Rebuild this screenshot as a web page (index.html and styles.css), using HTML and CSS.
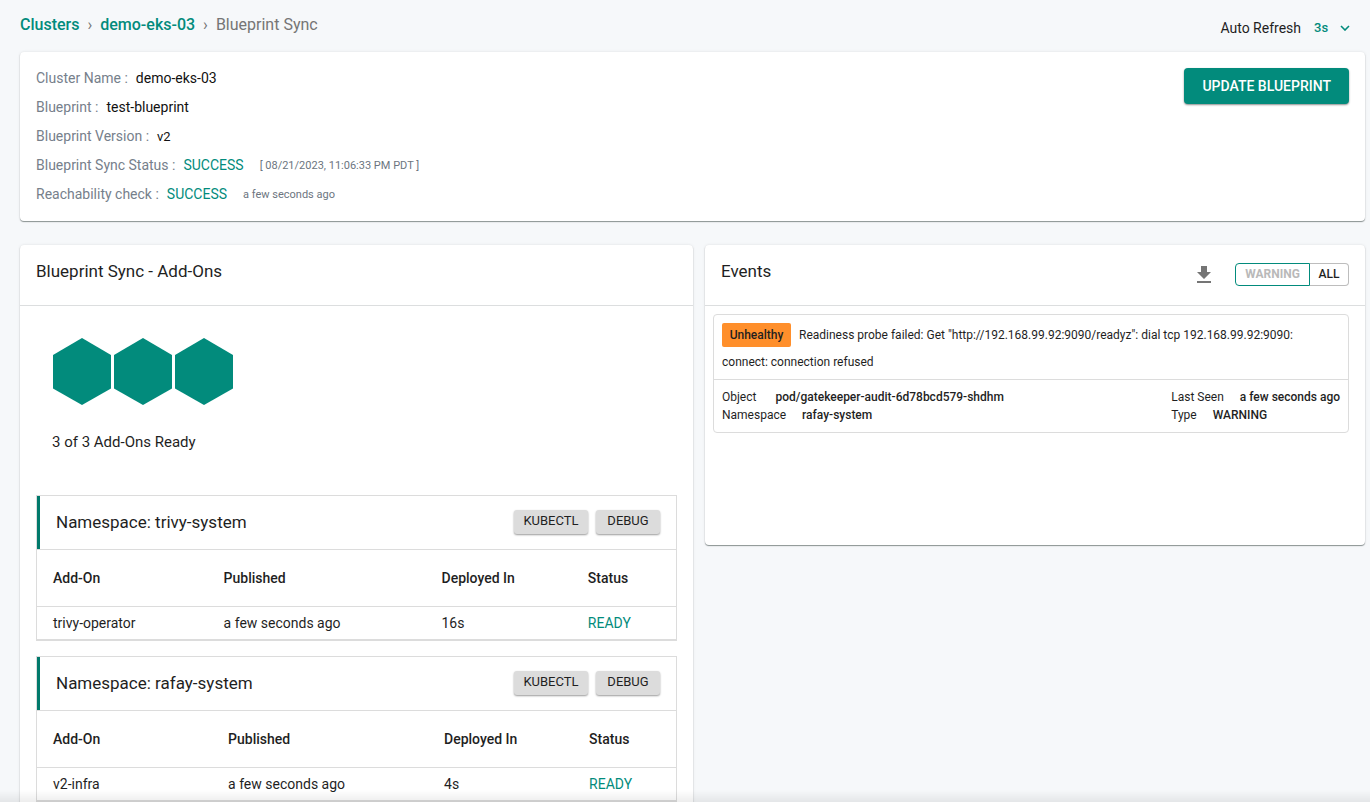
FILE: index.html
```html
<!DOCTYPE html>
<html lang="en">
<head>
<meta charset="utf-8">
<meta name="viewport" content="width=device-width, initial-scale=1">
<title>Blueprint Sync</title>
<link rel="stylesheet" href="styles.css">
</head>
<body>
<header class="topbar">
  <nav class="crumbs" aria-label="Breadcrumb">
    <a href="#clusters">Clusters</a>
    <span class="crumb-sep">›</span>
    <a href="#demo-eks-03">demo-eks-03</a>
    <span class="crumb-sep">›</span>
    <span>Blueprint Sync</span>
  </nav>
  <div class="refresh">
    <label for="refresh">Auto Refresh</label>
    <span class="select-wrap">
      <select id="refresh"><option>3s</option></select>
      <svg class="chevron" width="10" height="6" viewBox="0 0 10 6" aria-hidden="true"><path d="M1 1l4 4 4-4" fill="none" stroke="currentColor" stroke-width="1.6"/></svg>
    </span>
  </div>
</header>

<main class="page">
  <section class="card summary">
    <dl class="facts">
      <div class="fact"><dt>Cluster Name :</dt><dd>demo-eks-03</dd></div>
      <div class="fact"><dt>Blueprint :</dt><dd>test-blueprint</dd></div>
      <div class="fact"><dt>Blueprint Version :</dt><dd class="version">v2</dd></div>
      <div class="fact"><dt>Blueprint Sync Status :</dt><dd class="ok">SUCCESS</dd><dd class="when">[ 08/21/2023, 11:06:33 PM PDT ]</dd></div>
      <div class="fact"><dt>Reachability check :</dt><dd class="ok">SUCCESS</dd><dd class="when">a few seconds ago</dd></div>
    </dl>
    <button class="primary" type="button">UPDATE BLUEPRINT</button>
  </section>

  <div class="columns">
    <section class="card">
      <div class="card-head"><h2>Blueprint Sync - Add-Ons</h2></div>
      <div class="ready">
        <svg class="hexes" width="182" height="68" viewBox="0 0 182 68" role="img" aria-label="Three add-ons ready">
          <path d="M30 0L59 17V50.500L30 67L1 50.500V17Z"/>
          <path d="M91 0L120 17V50.500L91 67L62 50.500V17Z"/>
          <path d="M152 0L181 17V50.500L152 67L123 50.500V17Z"/>
        </svg>
        <p>3 of 3 Add-Ons Ready</p>
      </div>
      <div class="namespaces">
        <section class="ns">
          <div class="ns-head">
            <h3>Namespace: trivy-system</h3>
            <div class="ns-actions"><button class="small wide" type="button">KUBECTL</button><button class="small" type="button">DEBUG</button></div>
          </div>
          <table class="addons">
            <thead><tr><th class="c-name">Add-On</th><th class="c-pub">Published</th><th class="c-dep">Deployed In</th><th>Status</th></tr></thead>
            <tbody><tr><td>trivy-operator</td><td>a few seconds ago</td><td>16s</td><td class="ok">READY</td></tr></tbody>
          </table>
        </section>
        <section class="ns">
          <div class="ns-head">
            <h3>Namespace: rafay-system</h3>
            <div class="ns-actions"><button class="small wide" type="button">KUBECTL</button><button class="small" type="button">DEBUG</button></div>
          </div>
          <table class="addons addons-infra">
            <thead><tr><th class="c-name">Add-On</th><th class="c-pub">Published</th><th class="c-dep">Deployed In</th><th>Status</th></tr></thead>
            <tbody><tr><td>v2-infra</td><td>a few seconds ago</td><td>4s</td><td class="ok">READY</td></tr></tbody>
          </table>
        </section>
      </div>
    </section>

    <section class="card events">
      <div class="card-head">
        <h2>Events</h2>
        <div class="event-tools">
          <button class="download" type="button" aria-label="Download events">
            <svg width="14" height="18" viewBox="0 0 14 18" aria-hidden="true"><path d="M4 0h6v6h4l-7 7-7-7h4zM0 15h14v2H0z" fill="currentColor"/></svg>
          </button>
          <div class="toggle">
            <button class="toggle-on" type="button" aria-pressed="true">WARNING</button><button class="toggle-off" type="button" aria-pressed="false">ALL</button>
          </div>
        </div>
      </div>
      <article class="event">
        <p class="event-text"><strong class="tag">Unhealthy</strong>Readiness probe failed: Get "http://192.168.99.92:9090/readyz": dial tcp 192.168.99.92:9090: connect: connection refused</p>
        <div class="event-meta">
          <dl>
            <div class="object"><dt>Object</dt><dd>pod/gatekeeper-audit-6d78bcd579-shdhm</dd></div>
            <div><dt>Namespace</dt><dd>rafay-system</dd></div>
          </dl>
          <dl>
            <div><dt>Last Seen</dt><dd>a few seconds ago</dd></div>
            <div><dt>Type</dt><dd>WARNING</dd></div>
          </dl>
        </div>
      </article>
    </section>
  </div>
</main>
<div class="bottom-shade"></div>
</body>
</html>
```
FILE: styles.css
```css
* { box-sizing: border-box; }
html { scrollbar-width: none; }
body {
  margin: 0;
  background: #f6f8fa;
  color: #1f1f1f;
  font: 14px/20px Roboto, "Liberation Sans", sans-serif;
}
h2, h3, p, dl, dd { margin: 0; }
button { font-family: inherit; cursor: pointer; }

.topbar {
  display: flex;
  justify-content: space-between;
  height: 52px;
  padding: 12px 20px 0;
}
.crumbs { display: flex; gap: 8px; font-size: 16px; line-height: 26px; color: #757575; }
.crumbs a { color: #028b7c; font-weight: 500; text-decoration: none; }
.refresh { display: flex; align-items: center; gap: 13px; height: 32px; }
.select-wrap { display: flex; align-items: center; position: relative; }
.select-wrap select {
  appearance: none;
  width: 36px;
  padding: 0;
  border: 0;
  background: none;
  color: #028b7c;
  font: 500 13px/20px Roboto, sans-serif;
}
.chevron { position: absolute; right: 0; color: #028b7c; pointer-events: none; }

.page { padding: 0 5px 16px 20px; }
.card {
  background: #fff;
  border-radius: 4px;
  box-shadow: 0 1px 1px rgba(0, 20, 15, .42), 0 0 3px rgba(0, 0, 0, .1);
}
.summary {
  display: flex;
  justify-content: space-between;
  align-items: flex-start;
  padding: 16px;
  margin-bottom: 24px;
}
.facts { display: grid; gap: 8px; }
.fact { display: flex; gap: 8px; line-height: 21px; }
.fact dt { color: #76808b; }
.fact dd { color: #111; }
.fact .version { font-size: 13px; }
.fact .ok, .addons .ok { color: #028b7c; }
.fact .when { margin-left: 8px; font-size: 11px; color: #6c7580; }
.primary {
  height: 36px;
  padding: 0 18px;
  border: 0;
  border-radius: 4px;
  background: #028b7c;
  color: #fff;
  font-size: 14px;
  font-weight: 500;
  box-shadow: 0 1px 2px rgba(0, 0, 0, .45);
}

.columns {
  display: grid;
  grid-template-columns: 673fr 660fr;
  gap: 12px;
  align-items: start;
}
.card-head {
  display: flex;
  justify-content: space-between;
  height: 61px;
  padding: 14px 16px 0;
  border-bottom: 1px solid #dcdedf;
}
.card-head h2 { font-size: 17px; line-height: 24px; font-weight: 400; }

.ready { padding: 32px; }
.hexes { display: block; fill: #028b7c; }
.ready p { margin-top: 26px; font-size: 15px; line-height: 20px; }

.namespaces { display: grid; gap: 15px; padding: 11px 16px 16px; }
.ns { border: 1px solid #dcdcdc; }
.ns-head {
  display: flex;
  align-items: center;
  justify-content: space-between;
  height: 53px;
  padding: 0 16px 1px;
  border-left: 3px solid #00796b;
}
.ns-head h3 { font-size: 17px; font-weight: 400; }
.ns-actions { display: flex; gap: 8px; }
.small {
  height: 24px;
  width: 64px;
  padding: 0 0 3px;
  border: 0;
  border-radius: 3px;
  background: #dcdcdc;
  color: #1f1f1f;
  font-size: 13px;
  box-shadow: 0 1px 2px rgba(0, 0, 0, .4);
}
.wide { width: 74px; }
.addons { width: 100%; table-layout: fixed; border-collapse: separate; border-spacing: 0; }
.addons th, .addons td { padding: 0 16px; text-align: left; }
.addons th { height: 58px; border-top: 1px solid #dcdcdc; border-bottom: 1px solid #dcdcdc; font-weight: 500; }
.addons td { height: 33px; border-bottom: 1px solid #dcdcdc; }
.c-name { width: 26.7%; }
.c-pub { width: 34.1%; }
.c-dep { width: 22.9%; }
.addons-infra .c-name { width: 27.4%; }
.addons-infra .c-pub { width: 33.8%; }
.addons-infra .c-dep { width: 22.7%; }

.events { min-height: 300px; }
.event-tools { display: flex; align-items: flex-start; gap: 24px; padding-top: 4px; }
.download { display: flex; padding: 3px 0 0; border: 0; background: none; color: #757575; }
.toggle { display: flex; }
.toggle button { height: 23px; padding: 0 8px 2px; background: #fff; font-size: 12px; }
.toggle .toggle-on { width: 75px; border: 1px solid #028b7c; border-radius: 4px 0 0 4px; color: #b9b9b9; font-weight: 700; }
.toggle .toggle-off { width: 39px; border: 1px solid #bdbdbd; border-left: 0; border-radius: 0 4px 4px 0; color: #1f1f1f; font-weight: 500; }
.event { margin: 8px 16px 16px 8px; border: 1px solid #dcdcdc; border-radius: 4px; font-size: 12px; line-height: 18px; }
.event-text { padding: 7px 8px 3px; line-height: 27px; }
.tag {
  display: inline-block;
  min-width: 69px;
  margin-right: 8px;
  border-radius: 2px;
  background: #ff8f2b;
  line-height: 24px;
  font-weight: 500;
  text-align: center;
}
.event-meta { display: flex; justify-content: space-between; padding: 8px; border-top: 1px solid #dcdcdc; }
.event-meta dl div { display: flex; gap: 16px; }
.event-meta dl .object { gap: 19px; }
.event-meta dd { font-weight: 500; }

.bottom-shade {
  position: fixed;
  left: 0;
  right: 0;
  bottom: 0;
  height: 12px;
  background: linear-gradient(rgba(0, 0, 0, 0), rgba(0, 0, 0, .07));
  pointer-events: none;
}
```
